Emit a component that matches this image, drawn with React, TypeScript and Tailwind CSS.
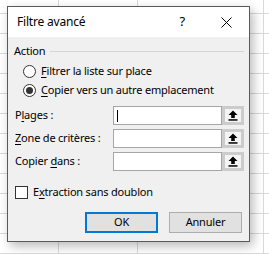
import React from "react";

const hLines = Array.from({ length: 13 }, (_, i) => 13 + i * 20);
const vLines = [58, 137, 263];

const SheetGrid = () => (
  <svg className="absolute inset-0" width="269" height="254">
    {hLines.map((y) => (
      <line key={`h${y}`} x1="0" x2="269" y1={y + 0.5} y2={y + 0.5} stroke="#d9d9d9" />
    ))}
    {vLines.map((x) => (
      <line key={`v${x}`} y1="0" y2="254" x1={x + 0.5} x2={x + 0.5} stroke="#d9d9d9" />
    ))}
  </svg>
);

const Radio = ({ checked }: { checked?: boolean }) => (
  <span className="flex h-[13px] w-[13px] items-center justify-center rounded-full border border-[#333] bg-white">
    {checked && <span className="h-[7px] w-[7px] rounded-full bg-[#333]" />}
  </span>
);

const RefButton = () => (
  <span className="flex h-[19px] w-[22px] items-center justify-center border-[3px] border-[#cccccc] bg-[#f4f4f4]">
    <svg width="10" height="11" viewBox="0 0 10 11">
      <path d="M5 0.5 L9.5 5 L6.8 5 L6.8 8 L3.2 8 L3.2 5 L0.5 5 Z" fill="#000" />
      <rect x="0.5" y="9.2" width="9" height="1.5" fill="#000" />
    </svg>
  </span>
);

const RangeRow = ({ label, focused }: { label: React.ReactNode; focused?: boolean }) => (
  <div className="flex h-[19px] items-center">
    <span className="w-[105px] pl-[7px]">{label}</span>
    <span className="flex h-[19px] w-[109px] items-center border border-[#a6a6a6] bg-white pl-[3px]">
      {focused && <span className="h-[12px] w-px bg-black" />}
    </span>
    <RefButton />
  </div>
);

const u = (c: string) => <span className="underline underline-offset-2">{c}</span>;

export default function App() {
  return (
    <div
      className="relative h-[254px] w-[269px] overflow-hidden bg-white text-[11px] tracking-[-0.2px] text-black"
      style={{ fontFamily: '"Noto Sans", "Open Sans", sans-serif' }}
    >
      <SheetGrid />
      <div className="relative ml-[7px] mt-[6px] flex h-[236px] w-[243px] flex-col border border-[#5a5a5a] bg-[#f0f0f0] shadow-[3px_4px_10px_rgba(0,0,0,0.28)]">
        <div className="flex h-[30px] items-center bg-white pl-[9px] text-[12px]">
          <span className="flex-1">Filtre avancé</span>
          <span className="mr-[36px] text-[13px]">?</span>
          <svg className="mr-[17px]" width="11" height="11" viewBox="0 0 11 11">
            <path d="M0.5 0.5 L10.5 10.5 M10.5 0.5 L0.5 10.5" stroke="#000" strokeWidth="1" />
          </svg>
        </div>

        <div className="mt-[6px] flex h-[16px] items-center pl-[6px] pr-[5px]">
          <span>Action</span>
          <span className="ml-[5px] h-px flex-1 bg-[#d5d5d5]" />
        </div>

        <div className="mt-[3px] flex flex-col pl-[15px]">
          <label className="flex h-[19px] items-center gap-[5px]">
            <Radio />
            <span>{u("F")}iltrer la liste sur place</span>
          </label>
          <label className="flex h-[19px] items-center gap-[5px]">
            <Radio checked />
            <span>{u("C")}opier vers un autre emplacement</span>
          </label>
        </div>

        <div className="mt-[6px] flex flex-col gap-[4px]">
          <RangeRow label={<>P{u("l")}ages :</>} focused />
          <RangeRow label={<>{u("Z")}one de critères :</>} />
          <RangeRow label={<>Copier {u("d")}ans :</>} />
        </div>

        <label className="mt-[14px] flex h-[14px] items-center gap-[5px] pl-[7px]">
          <span className="h-[13px] w-[13px] border border-[#333] bg-white" />
          <span>E{u("x")}traction sans doublon</span>
        </label>

        <div className="mt-auto mb-[8px] flex justify-end gap-[11px] pr-[7px]">
          <button className="h-[21px] w-[73px] border-2 border-[#0078d7] bg-[#e1e1e1]">OK</button>
          <button className="h-[21px] w-[73px] border border-[#adadad] bg-[#e1e1e1]">Annuler</button>
        </div>
      </div>
    </div>
  );
}
